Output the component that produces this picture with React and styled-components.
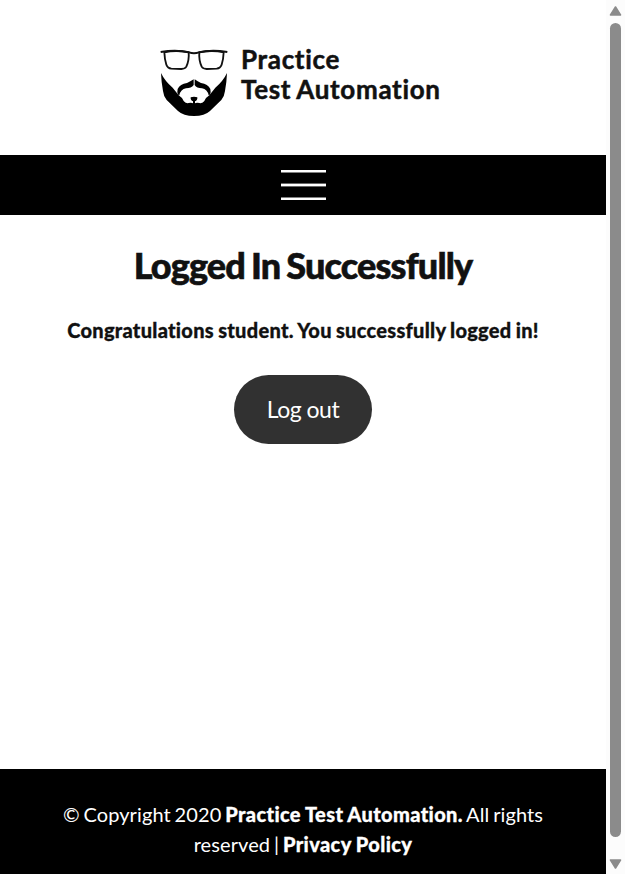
import React from 'react';
import styled, { createGlobalStyle } from 'styled-components';

const GlobalStyle = createGlobalStyle`
  * { box-sizing: border-box; }
  body { margin: 0; background: #fff; overflow: hidden; }
`;

const Window = styled.div`
  display: grid;
  grid-template-columns: 606px 19px;
  height: 874px;
  font-family: Lato, sans-serif;
  font-variant-ligatures: none;
  color: #111;
`;

const Page = styled.div`
  display: flex;
  flex-direction: column;
  min-width: 0;
`;

const Header = styled.header`
  display: flex;
  height: 155px;
  padding: 44px 0 0 158px;
`;

const LogoMark = styled.svg`
  width: 72px;
  height: 74px;
  margin-top: 1px;
  flex: none;
`;

const LogoText = styled.div`
  padding-left: 11px;
  font-size: 26px;
  font-weight: 700;
  line-height: 30px;
  letter-spacing: 0.68px;
  word-spacing: -1px;
  white-space: nowrap;
  -webkit-text-stroke: 0.5px #111;
`;

const MenuBar = styled.nav`
  display: flex;
  justify-content: center;
  align-items: center;
  height: 60px;
  background: #000;
`;

const MenuButton = styled.button`
  display: flex;
  padding: 0;
  border: 0;
  background: none;
`;

const Main = styled.main`
  display: flex;
  flex: 1;
  flex-direction: column;
  align-items: center;
`;

const Title = styled.h1`
  margin: 29px 0 0;
  font-size: 36px;
  font-weight: 900;
  line-height: 43px;
  letter-spacing: -0.85px;
  word-spacing: -1.7px;
  white-space: nowrap;
  -webkit-text-stroke: 0.6px #111;
`;

const Message = styled.p`
  margin: 28px 0 0;
  font-size: 20px;
  font-weight: 900;
  line-height: 30px;
  letter-spacing: 0.28px;
  word-spacing: -0.8px;
  white-space: nowrap;
  -webkit-text-stroke: 0.3px #111;
`;

const LogoutButton = styled.a`
  display: flex;
  justify-content: center;
  align-items: center;
  width: 138px;
  height: 69px;
  padding-bottom: 2px;
  margin-top: 30px;
  border-radius: 35px;
  background: #313131;
  color: #fff;
  font-size: 23px;
  letter-spacing: -0.5px;
  white-space: nowrap;
`;

const Footer = styled.footer`
  height: 105px;
  padding-top: 30px;
  background: #000;
  color: #fff;
  font-size: 20px;
  line-height: 30px;
  letter-spacing: 0.1px;
  word-spacing: -1.4px;
  text-align: center;
  white-space: nowrap;
`;

const FooterLink = styled.a`
  font-weight: 900;
  letter-spacing: 0.38px;
  word-spacing: -0.5px;
  -webkit-text-stroke: 0.3px #fff;
`;

const Scrollbar = styled.div`
  display: flex;
  flex-direction: column;
  align-items: center;
  background: #fcfcfc;
`;

const Arrow = styled.svg`
  width: 19px;
  height: 23px;
  flex: none;
`;

const DownArrow = styled(Arrow)`
  height: 37px;
`;

const Thumb = styled.div`
  width: 11px;
  height: 814px;
  flex: none;
  border-radius: 6px;
  background: #8b8b8b;
`;

function BeardLogo() {
  return (
    <LogoMark viewBox="24 15 216 222" aria-label="Practice Test Automation">
      <g fill="none" stroke="#111" strokeWidth="5.5">
        <path d="M43 37 Q77 29 116 37 Q118 60 109 80 Q105 87 94 87 L64 86 Q53 85 49 74 Q44 60 43 37Z" />
        <path d="M221 37 Q187 29 148 37 Q146 60 155 80 Q159 87 170 87 L200 86 Q211 85 215 74 Q220 60 221 37Z" />
        <path d="M32 36 Q79 28 117 37 Q132 42 147 37 Q185 28 232 36" strokeWidth="6" />
      </g>
      <path
        fill="#000"
        d="M33 99 Q45 124 68 143 L86 166 Q96 172 101 183 Q106 191 116 189 Q126 187 132 192 Q138 187 148 189 Q158 191 163 183 Q168 172 178 166 L196 143 Q219 124 231 99 Q230 126 225 153 Q223 170 214 180 L180 213 Q164 228 132 228 Q100 228 84 213 L50 180 Q41 170 39 153 Q34 126 33 99Z"
      />
      <path fill="#000" d="M131 118 L131 135 Q124 145 108 145 Q92 148 88 166 Q80 165 83 147 Q90 132 111 129 Q121 124 131 118Z" />
      <path fill="#000" d="M134 118 L134 135 Q140 145 156 145 Q172 148 176 166 Q184 165 181 147 Q174 132 153 129 Q143 124 134 118Z" />
      <path fill="#000" d="M122 172 Q132 169 142 172 Q143 181 135 184 L135 197 L129 197 L129 184 Q121 181 122 172Z" />
    </LogoMark>
  );
}

export default function App() {
  return (
    <>
      <GlobalStyle />
      <Window>
        <Page>
          <Header>
            <BeardLogo />
            <LogoText>
              Practice
              <br />
              Test Automation
            </LogoText>
          </Header>
          <MenuBar>
            <MenuButton aria-label="open menu">
              <svg width="45" height="30" viewBox="0 0 45 30" fill="#fff">
                <rect width="45" height="2.5" />
                <rect y="13.6" width="45" height="2.8" />
                <rect y="27.5" width="45" height="2.5" />
              </svg>
            </MenuButton>
          </MenuBar>
          <Main>
            <Title>Logged In Successfully</Title>
            <Message>Congratulations student. You successfully logged in!</Message>
            <LogoutButton>Log out</LogoutButton>
          </Main>
          <Footer>
            © Copyright 2020 <FooterLink>Practice Test Automation.</FooterLink> All rights
            <br />
            reserved | <FooterLink>Privacy Policy</FooterLink>
          </Footer>
        </Page>
        <Scrollbar>
          <Arrow viewBox="0 0 19 23">
            <path d="M9.5 7 L14.5 15 H4.5Z" fill="#8b8b8b" stroke="#8b8b8b" strokeWidth="1.6" strokeLinejoin="round" />
          </Arrow>
          <Thumb />
          <DownArrow viewBox="0 0 19 37">
            <path d="M4.5 23 H14.5 L9.5 31Z" fill="#8b8b8b" stroke="#8b8b8b" strokeWidth="1.6" strokeLinejoin="round" />
          </DownArrow>
        </Scrollbar>
      </Window>
    </>
  );
}
